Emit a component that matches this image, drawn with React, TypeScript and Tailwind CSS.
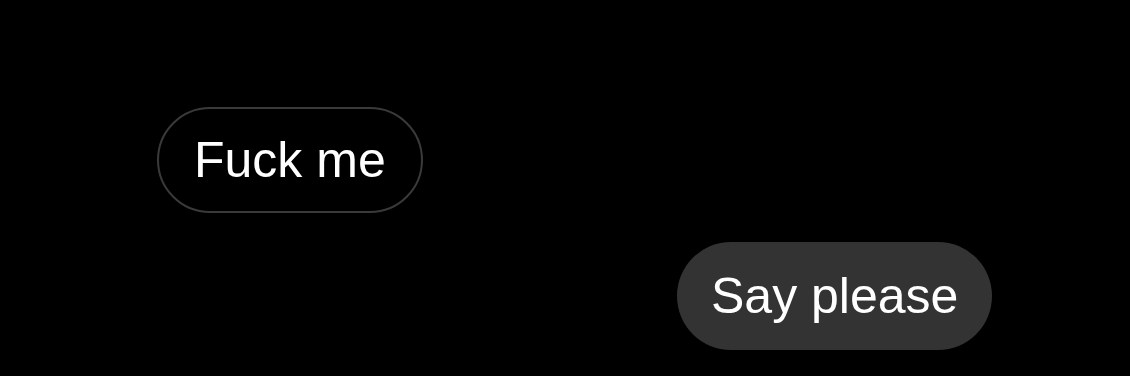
const App = () => {
  return (
    <div className="h-[376px] w-[1130px] bg-black flex flex-col font-['Liberation_Sans',Arial,sans-serif] text-white">
      <div className="mt-[107px] ml-[157px] self-start h-[106px] px-[35px] flex items-center rounded-full border-2 border-[#3a3a3a]">
        <span className="text-[50px] leading-none">Fuck me</span>
      </div>
      <div className="mt-[29px] ml-[677px] self-start h-[108px] px-[34px] flex items-center rounded-full bg-[#333333]">
        <span className="text-[50px] leading-none">Say please</span>
      </div>
    </div>
  );
};

export default App;
